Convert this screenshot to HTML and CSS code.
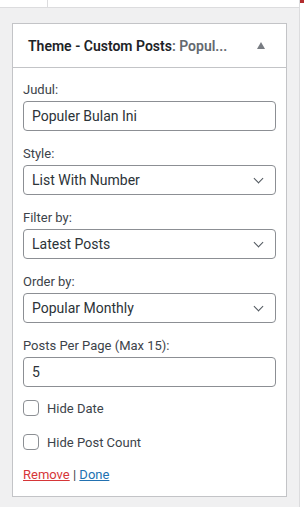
FILE: index.html
```html
<!DOCTYPE html>
<html lang="en">
  <head>
    <meta charset="UTF-8" />
    <meta name="viewport" content="width=device-width, initial-scale=1.0" />
    <title>Widget - Custom Posts</title>
    <link rel="stylesheet" href="styles.css">
  </head>
  <body>
    <div class="main">
      <div class="topbar"><div class="topbar-cell"></div></div>

      <div class="widget">
        <div class="widget-top">
          <h3 class="widget-title">
            Theme - Custom Posts<span class="in-title">: Popul...</span>
          </h3>
          <span class="toggle"></span>
        </div>

        <form class="widget-inside">
          <div class="field">
            <label for="judul">Judul:</label>
            <input type="text" id="judul" value="Populer Bulan Ini" />
          </div>

          <div class="field">
            <label for="style">Style:</label>
            <div class="select-wrap">
              <select id="style">
                <option>List With Number</option>
                <option>List</option>
              </select>
            </div>
          </div>

          <div class="field">
            <label for="filter">Filter by:</label>
            <div class="select-wrap">
              <select id="filter">
                <option>Latest Posts</option>
              </select>
            </div>
          </div>

          <div class="field">
            <label for="order">Order by:</label>
            <div class="select-wrap">
              <select id="order">
                <option>Popular Monthly</option>
              </select>
            </div>
          </div>

          <div class="field field-tight">
            <label for="per-page">Posts Per Page (Max 15):</label>
            <input type="text" id="per-page" value="5" />
          </div>

          <label class="check"><input type="checkbox" /> Hide Date</label>
          <label class="check"><input type="checkbox" /> Hide Post Count</label>

          <div class="widget-actions">
            <a href="#" class="remove">Remove</a> | <a href="#" class="done">Done</a>
          </div>
        </form>
      </div>
    </div>
    <div class="side"><span class="side-mark"></span></div>
  </body>
</html>
```

FILE: styles.css
```css
/* Global Styles */
body {
  margin: 0;
  display: flex;
  min-height: 100vh;
  background: #f0f0f1;
  font-family: Roboto, "Noto Sans", sans-serif;
  font-size: 13px;
  color: #3c434a;
}
.main {
  flex: 1;
}
/* Right edge strip */
.side {
  width: 4px;
  background: #ffffff;
  border-left: 1px solid #dcdcde;
}
.side-mark {
  display: block;
  height: 3px;
  background: #b32d2e;
}
/* Top strip */
.topbar {
  height: 7px;
  background: #ffffff;
  border-bottom: 1px solid #dcdcde;
}
.topbar-cell {
  width: 47px;
  height: 100%;
  border-right: 1px solid #dcdcde;
}
/* Widget box */
.widget {
  margin: 15px 12px;
  background: #ffffff;
  border: 1px solid #c3c4c7;
}
.widget-top {
  display: flex;
  align-items: center;
  height: 43px;
  padding: 0 15px;
  border-bottom: 1px solid #c3c4c7;
}
.widget-title {
  flex: 1;
  margin: 0;
  font-size: 14px;
  font-weight: 600;
  color: #1d2327;
  white-space: nowrap;
}
.in-title {
  color: #646970;
}
/* up arrow */
.toggle {
  width: 0;
  height: 0;
  margin-right: 6px;
  border-left: 4.5px solid transparent;
  border-right: 4.5px solid transparent;
  border-bottom: 7px solid #787c82;
}
/* Form */
.widget-inside {
  padding: 13px 10px 12px;
}
.field {
  margin-bottom: 14px;
}
.field-tight {
  margin-bottom: 11px;
}
.field label {
  display: block;
  line-height: 18px;
  margin-bottom: 2px;
}
input[type="text"],
select {
  display: block;
  box-sizing: border-box;
  width: 100%;
  height: 30px;
  margin: 0;
  padding: 0 8px;
  border: 1px solid #8c8f94;
  border-radius: 4px;
  background: #ffffff;
  font-family: inherit;
  font-size: 14px;
  color: #2c3338;
}
.select-wrap {
  position: relative;
}
select {
  appearance: none;
  -webkit-appearance: none;
}
.select-wrap::after {
  content: "";
  position: absolute;
  right: 14px;
  top: 10px;
  width: 6px;
  height: 6px;
  border-right: 1.5px solid #50575e;
  border-bottom: 1.5px solid #50575e;
  transform: rotate(45deg);
  pointer-events: none;
}
/* Checkboxes */
.check {
  display: flex;
  align-items: center;
  gap: 8px;
  height: 20px;
  margin-bottom: 14px;
}
.check input {
  appearance: none;
  -webkit-appearance: none;
  width: 16px;
  height: 16px;
  margin: 0;
  border: 1px solid #8c8f94;
  border-radius: 4px;
  background: #ffffff;
}
/* Footer links */
.widget-actions {
  line-height: 18px;
  color: #3c434a;
}
.widget-actions a {
  text-decoration: underline;
}
.remove {
  color: #d63638;
}
.done {
  color: #2271b1;
}
```
